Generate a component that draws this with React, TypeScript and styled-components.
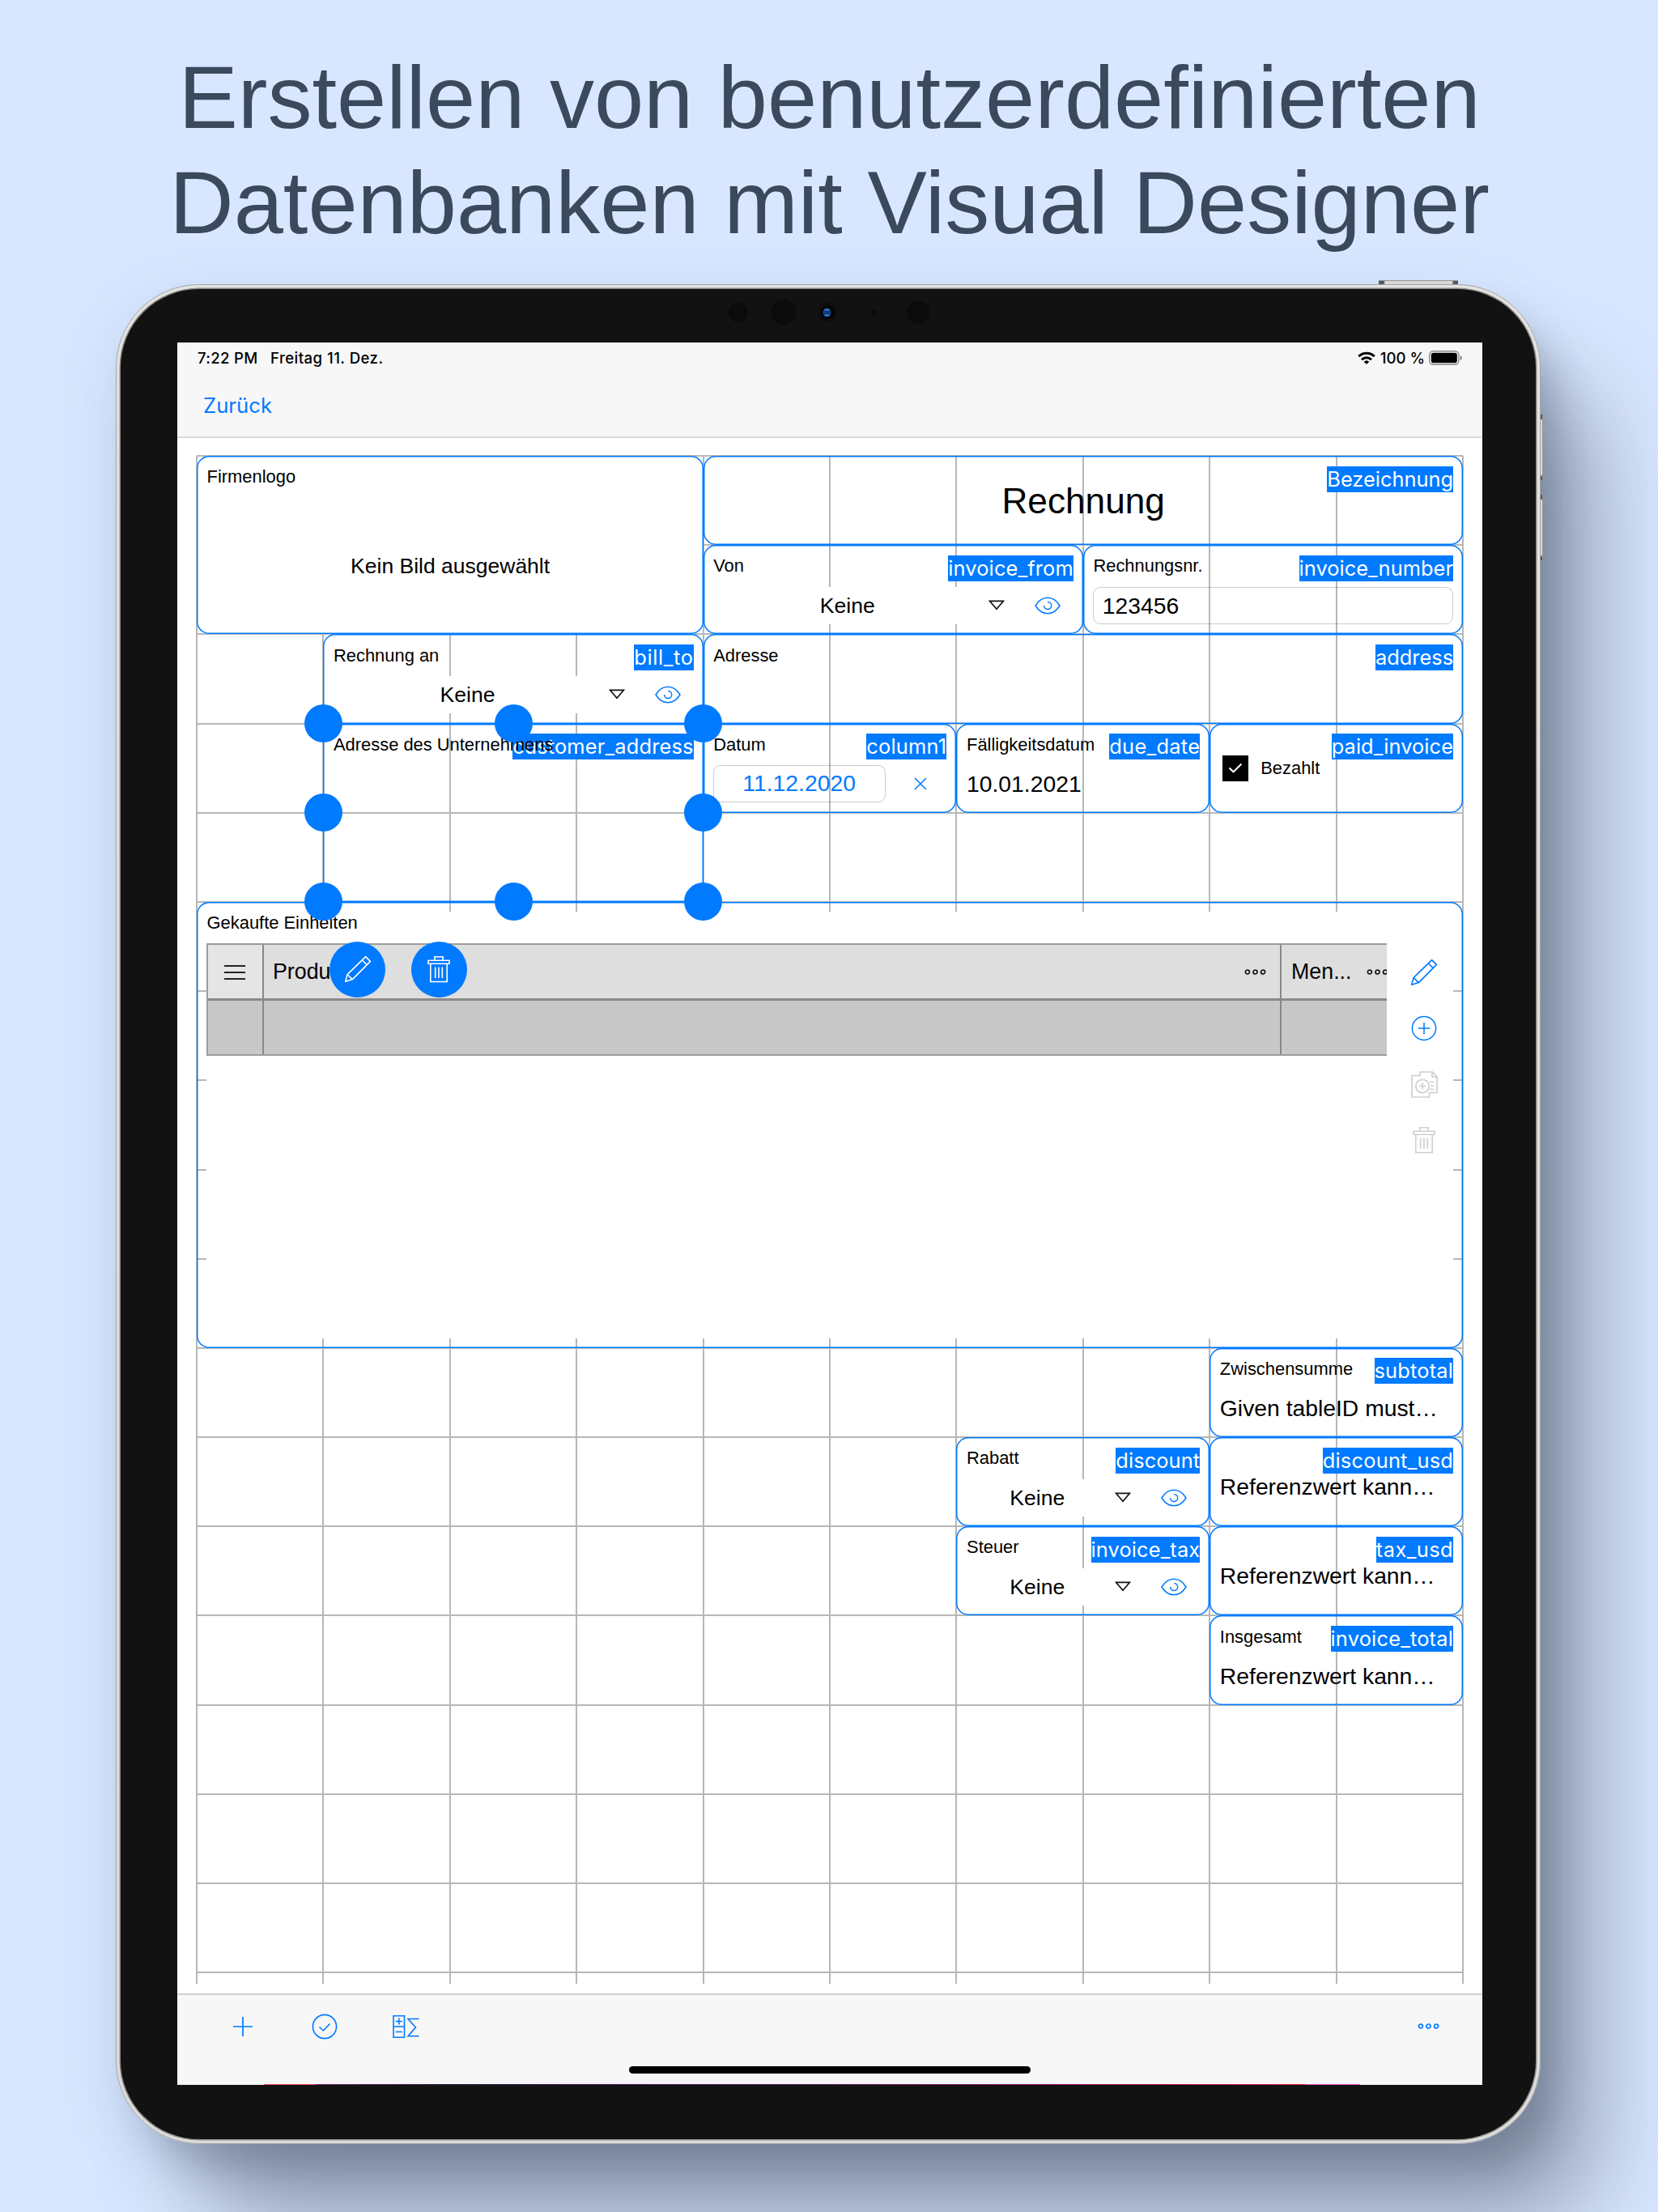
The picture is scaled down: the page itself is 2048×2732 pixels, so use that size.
import React from 'react';
import styled, { createGlobalStyle, css } from 'styled-components';

const BLUE = '#007aff';
const COL = 156.42;
const ROW = 110.2;
const HELV = `"Liberation Sans", Arial, sans-serif`;
const SYS = `Inter, "Liberation Sans", sans-serif`;

const GlobalStyle = createGlobalStyle`
  *, *::before, *::after { box-sizing: border-box; }
  html, body { margin: 0; padding: 0; }
  body { background: #d8e7ff; font-family: ${HELV}; color: #000; }
`;

const Page = styled.main`
  width: 2048px;
  height: 2732px;
  overflow: hidden;
  background: #d8e7ff;
  display: flex;
  flex-direction: column;
`;

const Title = styled.h1`
  margin: 0;
  padding: 55px 0 0 1px;
  height: 344px;
  flex: none;
  font-weight: 400;
  font-size: 110px;
  line-height: 130px;
  text-align: center;
  white-space: nowrap;
  color: #3b495c;
  span { display: block; }
`;

const Device = styled.section`
  position: relative;
  margin-left: 143px;
  margin-top: 7px;
  width: 1760px;
  height: 2297px;
  flex: none;
  border-radius: 103px;
  border: 1px solid #a3a4a6;
  background: linear-gradient(180deg, #e3e3e1, #dcdcda);
  padding: 5px;
  box-shadow:
    0 20px 70px rgba(90, 115, 160, 0.18),
    28px 38px 45px -12px rgba(50, 55, 65, 0.24),
    82px 112px 120px -16px rgba(60, 70, 88, 0.46);
`;

const Bezel = styled.div`
  height: 100%;
  padding-left: 4px;
  border-radius: 97px;
  background: #121212;
  box-shadow: 0 0 0 1.5px #8b8a88;
  display: flex;
  flex-direction: column;
  align-items: center;
`;

const PowerButton = styled.span`
  position: absolute;
  top: -6px;
  left: 1559px;
  width: 98px;
  height: 5px;
  border-top: 1px solid #98989a;
  background: linear-gradient(90deg, #55555a 0 6px, #d8d8d6 8px 90px, #55555a 93px);
`;

const SideButton = styled.span<{ $top: number }>`
  position: absolute;
  right: -4px;
  top: ${p => p.$top}px;
  width: 3px;
  height: 81px;
  border-right: 1px solid #98989a;
  background: linear-gradient(180deg, #55555a 0 5px, #d8d8d6 7px 74px, #55555a 77px);
`;

const Sensors = styled.div`
  height: 66px;
  flex: none;
  display: flex;
  align-items: flex-start;
  justify-content: center;
  svg { display: block; margin: 12px 2px 0 0; }
`;

const Screen = styled.div`
  width: 1612px;
  height: 2152px;
  flex: none;
  background: #fff;
  display: flex;
  flex-direction: column;
`;

const TopBar = styled.header`
  height: 118px;
  flex: none;
  background: #f7f7f7;
  border-bottom: 2px solid #dadada;
`;

const StatusBar = styled.div`
  height: 38px;
  padding: 0 24px 0 25px;
  display: flex;
  align-items: center;
  font: 500 18.6px/38px ${SYS};
  svg { display: block; }
`;

const Clock = styled.span`
  margin-right: 15.5px;
  letter-spacing: 0.3px;
`;
const Today = styled.span`letter-spacing: 0.45px;`;
const Spacer = styled.span`flex: 1;`;
const Percent = styled.span`margin: 0 5px 0 6px;`;

const BackButton = styled.a`
  display: inline-block;
  margin: 17px 0 0 32px;
  font: 400 25.7px/46px ${SYS};
  color: ${BLUE};
`;

const Workspace = styled.div`
  height: 1921px;
  flex: none;
  padding: 22px 0 0 24px;
`;

const Canvas = styled.div`
  display: grid;
  grid-template-columns: repeat(10, ${COL}px);
  grid-template-rows: repeat(17, ${ROW}px) 14px;
`;

const VLine = styled.i<{ $col: number }>`
  grid-column: ${p => Math.min(p.$col, 10)};
  grid-row: 1 / 19;
  justify-self: ${p => (p.$col > 10 ? 'end' : 'start')};
  width: 2px;
  margin: 0 -1px;
  background: #b7b7b7;
`;

const HLine = styled.i<{ $row: number }>`
  grid-column: 1 / 11;
  grid-row: ${p => p.$row};
  height: 2px;
  margin-top: -1px;
  background: #b7b7b7;
`;

const Field = styled.div<{ $c: string; $r: string; $fill?: boolean; $square?: boolean }>`
  grid-column: ${p => p.$c};
  grid-row: ${p => p.$r};
  min-width: 0;
  min-height: 0;
  display: grid;
  grid-template: 100% / 100%;
  border-radius: ${p => (p.$square ? 0 : 15)}px;
  background: ${p => (p.$fill ? '#fff' : 'transparent')};
  box-shadow: inset 0 0 0 1.5px ${BLUE};
  > * { grid-area: 1 / 1; }
`;

const Head = styled.div`
  position: relative;
  z-index: 1;
  height: 32px;
  margin: 12.6px 12px 0;
  display: flex;
  align-items: flex-start;
`;

const Label = styled.span`
  position: relative;
  z-index: 1;
  flex: 1 1 0;
  min-width: 0;
  margin: 1.6px 0 0 0.6px;
  font-size: 21.9px;
  line-height: 24px;
  white-space: nowrap;
`;

const Tag = styled.span<{ $track: number }>`
  flex: none;
  height: 32px;
  background: ${BLUE};
  color: #fff;
  font: 400 25.4px/32px ${SYS};
  letter-spacing: ${p => p.$track}px;
  white-space: nowrap;
`;

const Value = styled.div<{ $top: number; $size?: number; $center?: boolean }>`
  margin: ${p => p.$top}px 12px 0 12.6px;
  height: 34px;
  font-size: ${p => p.$size ?? 28.3}px;
  line-height: 34px;
  text-align: ${p => (p.$center ? 'center' : 'left')};
  white-space: nowrap;
`;

const Control = styled.div<{ $fill?: boolean }>`
  margin: 51.5px 12px 0;
  height: 46px;
  background: ${p => (p.$fill ? '#fff' : 'transparent')};
  display: flex;
  align-items: center;
  justify-content: space-between;
`;

const Choice = styled.span`
  flex: 1;
  padding-left: 13px;
  font-size: 26.6px;
  line-height: 46px;
  text-align: center;
`;

const IconSlot = styled.span`
  width: 63px;
  height: 46px;
  padding-right: 1px;
  display: flex;
  align-items: center;
  justify-content: center;
  svg { display: block; }
`;

const Input = styled.div<{ $w?: number; $accent?: boolean }>`
  width: ${p => (p.$w ? `${p.$w}px` : '100%')};
  height: 46px;
  border: 1px solid rgba(0, 0, 0, 0.2);
  border-radius: 9px;
  padding: 0 11px;
  font-size: 28.3px;
  line-height: 44px;
  ${p => p.$accent && css`color: ${BLUE}; text-align: center; line-height: 43px;`}
`;

const CheckRow = styled.div`
  margin: 39px 0 0 16px;
  height: 32px;
  display: flex;
  align-items: center;
  gap: 15px;
  font-size: 21.9px;
  line-height: 32px;
  svg { display: block; }
`;

const TablePane = styled.div`
  margin: 12px;
  padding-top: 39px;
  background: #fff;
  display: flex;
  align-items: flex-start;
`;

const Table = styled.div`
  flex: 1;
  min-width: 0;
  height: 139px;
  overflow: hidden;
  border: solid #9c9c9c;
  border-width: 2px 0 2px 2px;
  display: grid;
  grid-template-columns: 69px 1257px 220px;
  grid-template-rows: 69px 66px;
`;

const Cell = styled.div<{ $bg: string; $head?: boolean }>`
  background: ${p => p.$bg};
  border-right: 2px solid #888;
  border-bottom: ${p => (p.$head ? '3px solid #8a8a8a' : 'none')};
  padding: 2px 17px 0 11px;
  display: flex;
  align-items: center;
  justify-content: space-between;
  font-size: 26.8px;
  svg { display: block; flex: none; }
`;

const HandleCell = styled(Cell)`
  justify-content: center;
  padding: 2px 2px 0 0;
`;

const CountCell = styled(Cell)`
  padding-left: 12px;
  justify-content: flex-start;
  gap: 18.5px;
`;

const RowActions = styled.div`
  width: 82px;
  padding: 1px 0 0 12px;
  display: flex;
  flex-direction: column;
`;

const RowAction = styled.span`
  height: 69.3px;
  width: 68px;
  display: flex;
  align-items: center;
  justify-content: center;
  svg { display: block; }
`;

const Handle = styled.i<{ $x: number; $y: number }>`
  position: absolute;
  left: ${p => p.$x}%;
  top: ${p => p.$y}%;
  width: 47px;
  height: 47px;
  margin: -23.5px 0 0 -23.5px;
  border-radius: 50%;
  background: ${BLUE};
`;

const Selection = styled.div`
  grid-column: 2 / 5;
  grid-row: 4 / 6;
  position: relative;
  z-index: 3;
`;

const FloatingActions = styled.div`
  position: absolute;
  left: 8px;
  top: 269px;
  display: flex;
  gap: 31.5px;
`;

const RoundButton = styled.span`
  width: 69px;
  height: 69px;
  border-radius: 50%;
  background: ${BLUE};
  display: flex;
  align-items: center;
  justify-content: center;
  svg { display: block; }
`;

const BottomBar = styled.footer`
  position: relative;
  flex: 1;
  background: #f7f7f7;
  border-top: 2px solid #d0d0d0;
  display: flex;
  align-items: flex-start;
  padding: 13.5px 16px 0 30px;
`;

const ToolSlot = styled.span`
  width: 101px;
  height: 50px;
  display: flex;
  align-items: center;
  justify-content: center;
  svg { display: block; }
`;

const HomeIndicator = styled.i`
  position: absolute;
  left: 558px;
  bottom: 14px;
  width: 496px;
  height: 9px;
  border-radius: 5px;
  background: #000;
`;

const DockEdge = styled.i`
  position: absolute;
  left: 107px;
  bottom: 0;
  width: 1354px;
  height: 1px;
  background: linear-gradient(90deg, #ff4b60 0 64px, #7a2a78 64px, #301a5c 220px, #5a2070 640px, #a01a60 1000px, #f0204c 1285px, #e85ad0 1287px);
`;

/* ---- icons ---- */

const Eye = () => (
  <svg width="32" height="22" viewBox="0 0 32 22" fill="none" stroke={BLUE} strokeWidth="1.5">
    <path d="M1 11C5 4.5 10 1.3 16 1.3S27 4.5 31 11C27 17.5 22 20.7 16 20.7S5 17.5 1 11Z" />
    <path d="M16.2 6.5A4.500 4.500 0 1 1 11.700 11" />
  </svg>
);

const Triangle = () => (
  <svg width="20" height="13" viewBox="0 0 20 13" fill="none" stroke="#111" strokeWidth="1.7">
    <path d="M1.5 1.3H18.5L10 11.2Z" />
  </svg>
);

const Cross = () => (
  <svg width="16" height="16" viewBox="0 0 16 16" fill="none" stroke={BLUE} strokeWidth="1.5">
    <path d="M1 1L15 15M15 1L1 15" />
  </svg>
);

const Pencil = ({ color }: { color: string }) => (
  <svg width="34" height="34" viewBox="0 0 34 34" fill="none" stroke={color} strokeWidth="1.6" strokeLinejoin="round">
    <path d="M1.7 32.3L4 23.6L26.6 1.6L32.4 7.4L10.4 29.6Z" />
    <path d="M4 23.6L10.4 29.6M22.3 5.8L28.2 11.6" />
  </svg>
);

const Trash = ({ color }: { color: string }) => (
  <svg width="28" height="34" viewBox="0 0 28 34" fill="none" stroke={color} strokeWidth="1.6">
    <path d="M1 6.2H27V10.3H1ZM8.9 6.2V1.8H19.1V6.2M3.8 10.3H24.2V32.5H3.8Z" />
    <path d="M9.7 14.5V28M14 14.5V28M18.3 14.5V28" />
  </svg>
);

const PlusCircle = () => (
  <svg width="32" height="32" viewBox="0 0 32 32" fill="none" stroke={BLUE} strokeWidth="1.5">
    <circle cx="16" cy="16" r="14.6" />
    <path d="M16 8.8V23.2M8.8 16H23.2" />
  </svg>
);

const Duplicate = () => (
  <svg width="33" height="33" viewBox="0 0 33 33" fill="none" stroke="#cfcfcf" strokeWidth="1.7">
    <path d="M10.8 5.5V1H26.6L32 6.8V26.5H22.5V32H1V5.5Z" />
    <path d="M26 1V7H32" />
    <circle cx="14" cy="18.5" r="8.2" />
    <path d="M14 14.5V22.5M10 18.5H18M23 13.5H28.5M24 18H28.5M23 22.5H28.5" />
  </svg>
);

const Dots = ({ color }: { color: string }) => (
  <svg width="27" height="9" viewBox="0 0 27 9" fill="none" stroke={color} strokeWidth="1.7">
    <circle cx="3.9" cy="4.5" r="2.5" />
    <circle cx="13.5" cy="4.5" r="2.5" />
    <circle cx="23.1" cy="4.5" r="2.5" />
  </svg>
);

const Lines = () => (
  <svg width="26" height="20" viewBox="0 0 26 20" stroke="#222" strokeWidth="1.9">
    <path d="M0 2H26M0 10H26M0 18H26" />
  </svg>
);

const Plus = () => (
  <svg width="24" height="24" viewBox="0 0 24 24" stroke={BLUE} strokeWidth="1.7">
    <path d="M12 0V24M0 12H24" />
  </svg>
);

const CheckCircle = () => (
  <svg width="32" height="32" viewBox="0 0 32 32" fill="none" stroke={BLUE} strokeWidth="1.6">
    <circle cx="16" cy="16" r="14.6" />
    <path d="M9.5 16.5L14.3 21L22.5 12.5" />
  </svg>
);

const Formula = () => (
  <svg width="33" height="28" viewBox="0 0 33 28" fill="none" stroke={BLUE} strokeWidth="1.6">
    <path d="M1 .8H14.5V27.2H1ZM1 14H14.5" />
    <path d="M7.8 3.5V11.5M3.8 7.5H11.8M3.8 20.5H11.8" />
    <path d="M32.5 4.5H19L28.5 15L19 25.8H32.5" />
  </svg>
);

const CheckBox = () => (
  <svg width="32" height="32" viewBox="0 0 32 32" fill="none">
    <rect width="32" height="32" fill="#000" />
    <path d="M8.5 15.5L13.5 20.3L23.5 10.5" stroke="#fff" strokeWidth="2" />
  </svg>
);

const Wifi = () => (
  <svg width="22" height="17" viewBox="0 0 22 17" fill="none" stroke="#000" strokeWidth="3">
    <path d="M1.3 6.2A14 14 0 0 1 20.7 6.2" />
    <path d="M5 10.3A8.600 8.600 0 0 1 17 10.3" />
    <path d="M11 16L7.7 12.8A4.800 4.800 0 0 1 14.3 12.8Z" fill="#000" stroke="none" />
  </svg>
);

const Battery = () => (
  <svg width="42" height="18" viewBox="0 0 42 18">
    <rect x=".8" y=".8" width="36" height="16.4" rx="4.5" fill="none" stroke="#8a8a8a" strokeWidth="1.4" />
    <rect x="2.8" y="2.8" width="32" height="12.4" rx="2.8" fill="#000" />
    <path d="M38.5 6V12C40.3 11.4 40.8 10.2 40.8 9S40.3 6.6 38.5 6Z" fill="#8a8a8a" />
  </svg>
);

const SensorArray = () => (
  <svg width="250" height="34" viewBox="0 0 250 34">
    <circle cx="13" cy="17" r="12" fill="#0b0b0b" />
    <circle cx="69" cy="16.5" r="15.5" fill="#0b0b0b" />
    <circle cx="123.5" cy="17" r="12.5" fill="#0d0d0d" />
    <circle cx="123.5" cy="17" r="8" fill="#020208" />
    <circle cx="122.5" cy="17" r="5.2" fill="#0f3f78" />
    <path d="M119.5 13.5H125.5M119.5 20.5H125.5" stroke="#2f86d8" strokeWidth="2.2" />
    <circle cx="180" cy="17" r="3.8" fill="#0b0b0b" />
    <circle cx="235" cy="17" r="14" fill="#0b0b0b" />
  </svg>
);

/* ---- composed fields ---- */

type BoxProps = {
  c: string;
  r: string;
  label?: string;
  tag?: string;
  track?: number;
  fill?: boolean;
  square?: boolean;
  children?: React.ReactNode;
};

const FormField = ({ c, r, label, tag, track = 0.2, fill, square, children }: BoxProps) => (
  <Field $c={c} $r={r} $fill={fill} $square={square}>
    <Head>
      <Label>{label}</Label>
      {tag && <Tag $track={track}>{tag}</Tag>}
    </Head>
    {children}
  </Field>
);

const Lookup = () => (
  <Control $fill>
    <Choice>Keine</Choice>
    <IconSlot><Triangle /></IconSlot>
    <IconSlot><Eye /></IconSlot>
  </Control>
);

const cols = Array.from({ length: 11 }, (_, i) => i + 1);
const rows = Array.from({ length: 18 }, (_, i) => i + 1);

export default function App() {
  return (
    <Page>
      <GlobalStyle />
      <Title>
        <span>Erstellen von benutzerdefinierten</span>
        <span>Datenbanken mit Visual Designer</span>
      </Title>
      <Device>
        <PowerButton />
        <SideButton $top={160} />
        <SideButton $top={259} />
        <Bezel>
          <Sensors><SensorArray /></Sensors>
          <Screen>
            <TopBar>
              <StatusBar>
                <Clock>7:22 PM</Clock>
                <Today>Freitag 11. Dez.</Today>
                <Spacer />
                <Wifi />
                <Percent>100 %</Percent>
                <Battery />
              </StatusBar>
              <BackButton>Zurück</BackButton>
            </TopBar>
            <Workspace>
              <Canvas>
                {cols.map(c => <VLine key={c} $col={c} />)}
                {rows.map(r => <HLine key={r} $row={r} />)}

                <FormField c="1 / 5" r="1 / 3" label="Firmenlogo" fill>
                  <Value $top={119} $size={26.5} $center>Kein Bild ausgewählt</Value>
                </FormField>
                <FormField c="5 / 11" r="1" tag="Bezeichnung" track={0}>
                  <Value $top={38.5} $size={44.2} $center>Rechnung</Value>
                </FormField>
                <FormField c="5 / 8" r="2" label="Von" tag="invoice_from" track={0.15}><Lookup /></FormField>
                <FormField c="8 / 11" r="2" label="Rechnungsnr." tag="invoice_number" track={0.05}>
                  <Control><Input>123456</Input></Control>
                </FormField>
                <FormField c="2 / 5" r="3" label="Rechnung an" tag="bill_to" track={0.65}><Lookup /></FormField>
                <FormField c="5 / 11" r="3" label="Adresse" tag="address" track={0} />
                <FormField c="2 / 5" r="4 / 6" label="Adresse des Unternehmens" tag="customer_address" track={0.18} square />
                <FormField c="5 / 7" r="4" label="Datum" tag="column1" track={0.25}>
                  <Control>
                    <Input $w={213} $accent>11.12.2020</Input>
                    <IconSlot><Cross /></IconSlot>
                  </Control>
                </FormField>
                <FormField c="7 / 9" r="4" label="Fälligkeitsdatum" tag="due_date" track={0.3}>
                  <Value $top={57.3}>10.01.2021</Value>
                </FormField>
                <FormField c="9 / 11" r="4" tag="paid_invoice" track={0.08}>
                  <CheckRow><CheckBox /><span>Bezahlt</span></CheckRow>
                </FormField>

                <FormField c="1 / 11" r="6 / 11" label="Gekaufte Einheiten">
                  <TablePane>
                    <Table>
                      <HandleCell $bg="#e5e5e5" $head><Lines /></HandleCell>
                      <Cell $bg="#dedede" $head><span>Produkt</span><Dots color="#111" /></Cell>
                      <CountCell $bg="#dedede" $head><span>Men...</span><Dots color="#111" /></CountCell>
                      <Cell $bg="#c8c8c8" />
                      <Cell $bg="#c8c8c8" />
                      <Cell $bg="#c8c8c8" />
                    </Table>
                    <RowActions>
                      <RowAction><Pencil color={BLUE} /></RowAction>
                      <RowAction><PlusCircle /></RowAction>
                      <RowAction><Duplicate /></RowAction>
                      <RowAction><Trash color="#cfcfcf" /></RowAction>
                    </RowActions>
                  </TablePane>
                </FormField>

                <FormField c="9 / 11" r="11" label="Zwischensumme" tag="subtotal" track={0.18}>
                  <Value $top={57.3}>Given tableID must…</Value>
                </FormField>
                <FormField c="7 / 9" r="12" label="Rabatt" tag="discount" track={0.1}><Lookup /></FormField>
                <FormField c="9 / 11" r="12" tag="discount_usd" track={0.22}>
                  <Value $top={43.8}>Referenzwert kann…</Value>
                </FormField>
                <FormField c="7 / 9" r="13" label="Steuer" tag="invoice_tax" track={0.12}><Lookup /></FormField>
                <FormField c="9 / 11" r="13" tag="tax_usd" track={0.45}>
                  <Value $top={43.8}>Referenzwert kann…</Value>
                </FormField>
                <FormField c="9 / 11" r="14" label="Insgesamt" tag="invoice_total" track={0.2}>
                  <Value $top={57.3}>Referenzwert kann…</Value>
                </FormField>

                <Selection>
                  {[0, 50, 100].map(y => [0, 50, 100].map(x =>
                    x === 50 && y === 50 ? null : <Handle key={`${x}-${y}`} $x={x} $y={y} />
                  ))}
                  <FloatingActions>
                    <RoundButton><Pencil color="#fff" /></RoundButton>
                    <RoundButton><Trash color="#fff" /></RoundButton>
                  </FloatingActions>
                </Selection>
              </Canvas>
            </Workspace>
            <BottomBar>
              <ToolSlot><Plus /></ToolSlot>
              <ToolSlot><CheckCircle /></ToolSlot>
              <ToolSlot><Formula /></ToolSlot>
              <Spacer />
              <ToolSlot><Dots color={BLUE} /></ToolSlot>
              <HomeIndicator />
              <DockEdge />
            </BottomBar>
          </Screen>
        </Bezel>
      </Device>
    </Page>
  );
}
